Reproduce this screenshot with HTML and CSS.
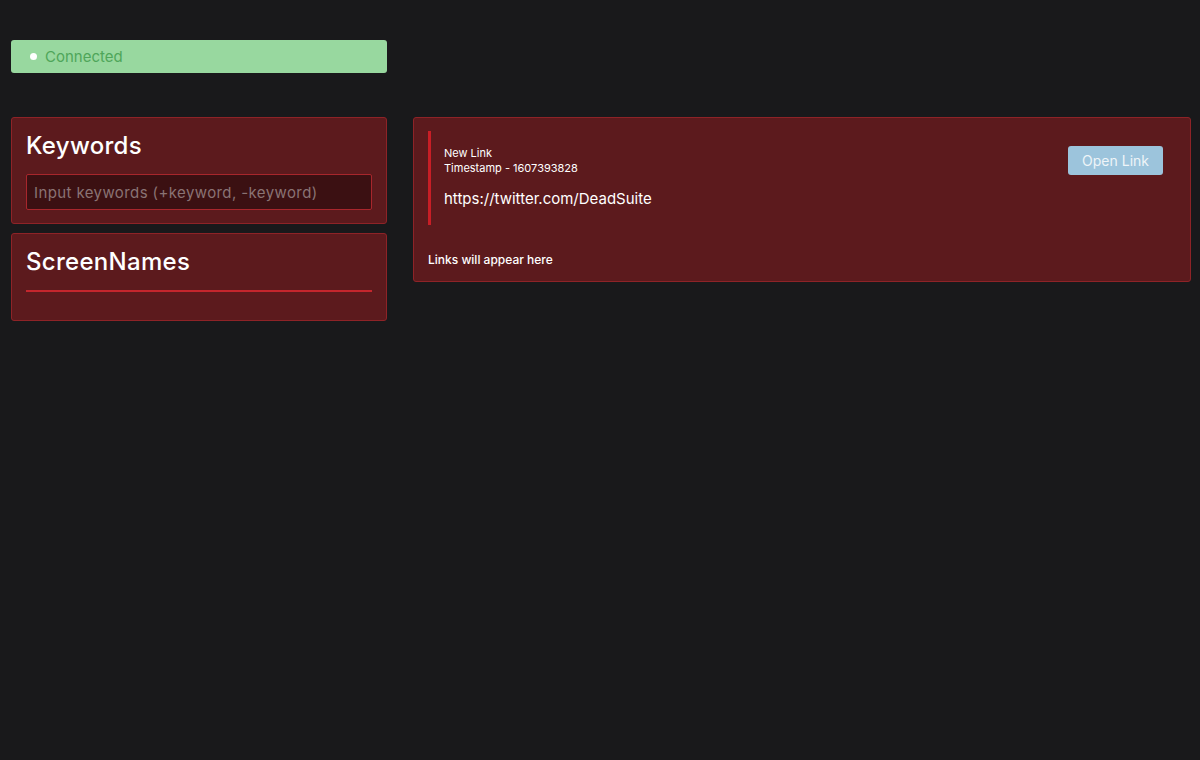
FILE: index.html
```html
<!DOCTYPE html>
<html lang="en">
<head>
    <meta charset="UTF-8">
    <title>Link Monitor</title>
    <link rel="stylesheet" href="styles.css">
</head>
<body>
<div class="page">
    <div class="status">
        <span class="dot"></span>
        <span class="status-text">Connected</span>
    </div>

    <div class="main">
        <div class="side">
            <div class="card">
                <h2>Keywords</h2>
                <input type="text" class="kw-input" placeholder="Input keywords (+keyword, -keyword)">
            </div>
            <div class="card">
                <h2>ScreenNames</h2>
                <div class="names"></div>
            </div>
        </div>

        <div class="card feed">
            <div class="link-item">
                <div class="link-info">
                    <div class="meta">New Link</div>
                    <div class="meta">Timestamp - 1607393828</div>
                    <div class="url">https://twitter.com/DeadSuite</div>
                </div>
                <button class="open-btn">Open Link</button>
            </div>
            <p class="hint">Links will appear here</p>
        </div>
    </div>
</div>
</body>
</html>
```

FILE: styles.css
```css
*{box-sizing:border-box;}
body{margin:0;background:#19191b;color:#fff;font-family:Inter,"Open Sans",sans-serif;}
.page{padding:40px 9px 0 11px;}
.status{width:376px;height:33px;background:#98d89f;border-radius:3px;display:flex;align-items:center;padding-left:19px;}
.dot{width:7px;height:7px;border-radius:50%;background:#fff;margin-right:8px;}
.status-text{font-size:15px;color:#4fa65a;}
.main{display:grid;grid-template-columns:376px 1fr;gap:26px;margin-top:44px;align-items:start;}
.side{display:flex;flex-direction:column;gap:9px;}
.card{background:#5c1a1d;border:1px solid #8e2327;border-radius:3px;padding:14px 14px 13px;}
h2{margin:0 0 14px;font-size:24px;font-weight:500;line-height:28px;letter-spacing:.3px;}
.kw-input{width:100%;height:36px;background:#3b1012;border:1px solid #a8262c;border-radius:2px;color:#fff;font-family:inherit;font-size:15px;padding:0 7px;outline:none;letter-spacing:.4px;}
.kw-input::placeholder{color:#8a7374;}
.names{border-top:2px solid #c4262d;margin-top:14px;height:17px;}
.feed{padding:13px 27px 14px 14px;}
.link-item{display:flex;justify-content:space-between;align-items:flex-start;border-left:3px solid #c81e26;padding:15px 0 17px 13px;}
.meta{font-size:11px;line-height:15px;}
.url{font-size:15px;margin-top:13px;}
.open-btn{background:#9cc4dc;color:#eef4f8;border:none;border-radius:3px;font-family:inherit;font-size:14px;padding:6px 14px;margin-top:0;}
.hint{margin:27px 0 0;font-size:12px;font-weight:500;}
```
